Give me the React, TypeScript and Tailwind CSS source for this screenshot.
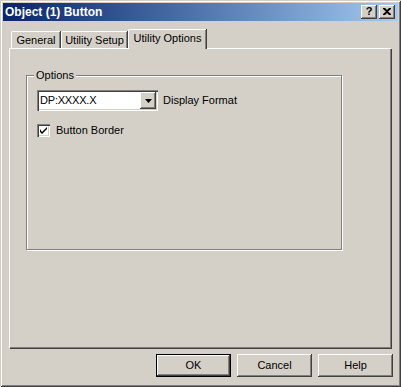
import React from "react";

const raised =
  "bg-[#d4d0c8] shadow-[inset_-1px_-1px_0_#404040,inset_1px_1px_0_#ffffff,inset_-2px_-2px_0_#808080,inset_2px_2px_0_#d4d0c8]";

function TitleButton({ children }: { children: React.ReactNode }) {
  return (
    <div className={`w-[16px] h-[14px] flex items-center justify-center ${raised}`}>
      {children}
    </div>
  );
}

function Tab({
  label,
  width,
  selected,
}: {
  label: string;
  width: number;
  selected?: boolean;
}) {
  return (
    <div
      style={{ width }}
      className={
        selected
          ? "relative z-10 h-[20px] -mb-px bg-[#d4d0c8] border-l border-t border-white rounded-tl-[2px] shadow-[inset_-1px_0_0_#808080,1px_0_0_#404040] flex justify-center pt-[2px]"
          : "h-[17px] bg-[#d4d0c8] border-l border-t border-white rounded-tl-[2px] shadow-[inset_-1px_0_0_#808080,1px_0_0_#404040] flex justify-center pt-[2px]"
      }
    >
      <span className="leading-[13px]">{label}</span>
    </div>
  );
}

function PushButton({ label, isDefault }: { label: string; isDefault?: boolean }) {
  return (
    <button
      className={
        isDefault
          ? "w-[75px] h-[23px] bg-[#d4d0c8] border border-black shadow-[inset_-1px_-1px_0_#404040,inset_1px_1px_0_#ffffff,inset_-2px_-2px_0_#808080] flex items-center justify-center"
          : `w-[75px] h-[23px] flex items-center justify-center ${raised}`
      }
    >
      {label}
    </button>
  );
}

export default function App() {
  return (
    <div
      className="w-[401px] h-[387px] bg-[#d4d0c8] p-[3px] flex flex-col text-[11px] text-black font-['Liberation_Sans',Arial,sans-serif] shadow-[inset_1px_1px_0_#d4d0c8,inset_-1px_-1px_0_#404040,inset_2px_2px_0_#ffffff,inset_-2px_-2px_0_#808080]"
    >
      {/* title bar */}
      <div className="h-[18px] bg-gradient-to-r from-[#0a246a] to-[#a6caf0] flex items-center pl-[2px] pr-[3px]">
        <span className="text-white font-bold text-[12px] leading-none flex-1">
          Object (1) Button
        </span>
        <div className="flex gap-[2px]">
          <TitleButton>
            <span className="font-bold text-[11px] leading-none -mt-px">?</span>
          </TitleButton>
          <TitleButton>
            <svg width="8" height="7" viewBox="0 0 8 7" className="-mt-px">
              <path d="M0 0h2l2 2 2-2h2v1L5 3.5 8 6v1H6L4 5 2 7H0V6l3-2.5L0 1z" fill="#000" />
            </svg>
          </TitleButton>
        </div>
      </div>

      {/* tabs */}
      <div className="mt-[8px] mx-[6px] flex flex-col">
        <div className="flex items-end pl-[2px] gap-[1px]">
          <Tab label="General" width={49} />
          <Tab label="Utility Setup" width={66} />
          <Tab label="Utility Options" width={78} selected />
        </div>
        <div className="h-[300px] border-l border-t border-white shadow-[inset_-1px_-1px_0_#808080,1px_1px_0_#404040] w-[382px] pt-[26px] pl-[16px]">
          {/* group box */}
          <div className="relative w-[316px] h-[175px] border border-[#808080] shadow-[inset_1px_1px_0_#ffffff,1px_1px_0_#ffffff] pt-[14px] pl-[10px]">
            <span className="absolute -top-[7px] left-[7px] bg-[#d4d0c8] px-[2px] leading-[13px]">
              Options
            </span>
            <div className="flex items-center gap-[5px]">
              <div className="w-[121px] h-[21px] bg-white shadow-[inset_1px_1px_0_#808080,inset_2px_2px_0_#404040,inset_-1px_-1px_0_#ffffff,inset_-2px_-2px_0_#d4d0c8] flex items-center pl-[3px] pr-[2px]">
                <span className="flex-1 text-[11px] tracking-[-0.2px]">DP:XXXX.X</span>
                <div className={`w-[16px] h-[17px] flex items-center justify-center ${raised}`}>
                  <svg width="7" height="4" viewBox="0 0 7 4">
                    <path d="M0 0h7L3.5 4z" fill="#000" />
                  </svg>
                </div>
              </div>
              <span>Display Format</span>
            </div>
            <div className="flex items-center gap-[6px] mt-[11px]">
              <div className="w-[13px] h-[13px] bg-white shadow-[inset_1px_1px_0_#808080,inset_2px_2px_0_#404040,inset_-1px_-1px_0_#ffffff,inset_-2px_-2px_0_#d4d0c8] flex items-center justify-center">
                <svg width="7" height="7" viewBox="0 0 7 7">
                  <path d="M0 2v3l2 2 5-5V0L2 5z" fill="#000" />
                </svg>
              </div>
              <span>Button Border</span>
            </div>
          </div>
        </div>
      </div>

      {/* buttons */}
      <div className="mt-[6px] flex justify-end gap-[6px] pr-[5px]">
        <PushButton label="OK" isDefault />
        <PushButton label="Cancel" />
        <PushButton label="Help" />
      </div>
    </div>
  );
}
